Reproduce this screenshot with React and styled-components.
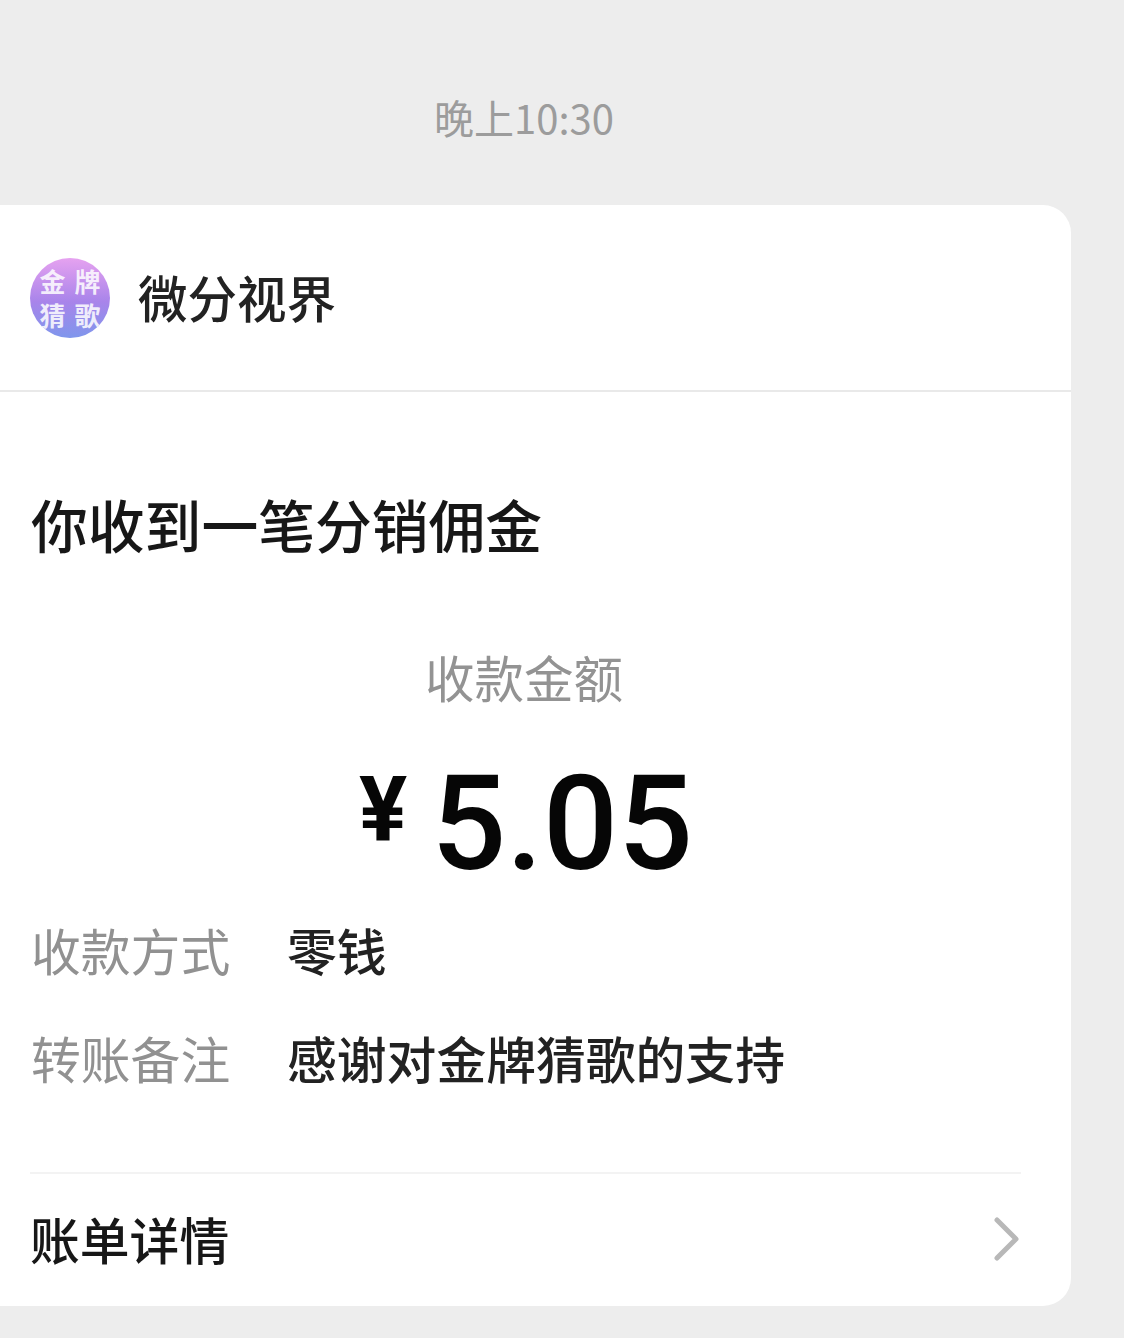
import styled, { createGlobalStyle } from "styled-components";

const CJK = `"Noto Sans CJK SC", "Noto Sans", sans-serif`;

const GlobalStyle = createGlobalStyle`
    html, body {
        margin: 0;
        padding: 0;
        height: 100%;
        overflow: hidden;
        background-color: #ededed;
        font-family: ${CJK};
    }
`;

const Page = styled.div`
    width: 1124px;
    height: 1338px;
    overflow: hidden;
    background-color: #ededed;
    padding-top: 90px;
    box-sizing: border-box;
`;

const Time = styled.div`
    width: 1048px;
    height: 54px;
    line-height: 54px;
    font-size: 40px;
    color: #9c9c9c;
    text-align: center;
    margin-bottom: 61px;
`;

const Card = styled.div`
    width: 1111px;
    height: 1101px;
    margin-left: -40px;
    padding-left: 40px;
    box-sizing: border-box;
    background-color: #ffffff;
    border-radius: 28px;
    display: flex;
    flex-direction: column;
`;

const Header = styled.div`
    display: flex;
    align-items: center;
    gap: 28px;
    height: 187px;
    margin-left: -40px;
    padding-left: 70px;
    box-sizing: border-box;
    border-bottom: 2px solid #e9e9e9;
`;

const Avatar = styled.div`
    width: 80px;
    height: 80px;
    border-radius: 50%;
    background: linear-gradient(180deg, #e6a2f0 0%, #a884ea 55%, #7f96ec 100%);
    display: grid;
    grid-template-columns: 35px 35px;
    grid-template-rows: 34px 34px;
    justify-content: center;
    align-content: center;
    color: rgba(255, 255, 255, 0.85);
    overflow: hidden;
`;

const AvatarChar = styled.span`
    display: block;
    font-size: 26px;
    font-weight: 700;
    line-height: 34px;
    text-align: center;
`;

const BrandName = styled.div`
    margin-top: -2px;
    font-size: 49.5px;
    font-weight: 500;
    line-height: 60px;
    color: #222222;
`;

const Title = styled.h1`
    margin: 95px 0 0 31px;
    font-size: 56.8px;
    font-weight: 500;
    line-height: 72px;
    color: #171717;
`;

const AmountLabel = styled.div`
    width: 1048px;
    margin-top: 88px;
    font-size: 49.5px;
    font-weight: 400;
    line-height: 60px;
    text-align: center;
    color: #939393;
`;

const Amount = styled.div`
    width: 1052px;
    display: flex;
    justify-content: center;
    align-items: flex-start;
    gap: 24px;
    margin-top: 57px;
    height: 120px;
    color: #060606;
    font-family: Roboto, "Liberation Sans", sans-serif;
`;

const Currency = styled.span`
    font-size: 90px;
    font-weight: 700;
    line-height: 94px;
`;

const Value = styled.span`
    font-size: 132px;
    font-weight: 500;
    line-height: 120px;
`;

const InfoList = styled.div`
    display: flex;
    flex-direction: column;
    gap: 48px;
    margin: 35px 0 0 31px;
`;

const InfoRow = styled.div`
    display: flex;
    gap: 60px;
    height: 60px;
    font-size: 49.8px;
    line-height: 60px;
`;

const InfoLabel = styled.span`
    width: 196px;
    white-space: nowrap;
    font-weight: 400;
    color: #919191;
`;

const InfoValue = styled.span`
    font-weight: 500;
    color: #222222;
`;

const Footer = styled.div`
    display: flex;
    align-items: center;
    justify-content: space-between;
    margin: 85px 50px 0 30px;
    height: 130px;
    box-sizing: border-box;
    border-top: 2px solid #f3f3f3;
`;

const FooterText = styled.span`
    font-size: 49.8px;
    font-weight: 500;
    line-height: 60px;
    color: #171717;
`;

const ChevronIcon = styled.svg`
    margin-top: 2px;
`;

function Chevron() {
    return (
        <ChevronIcon width="28" height="46" viewBox="0 0 28 46" fill="none">
            <path d="M4 4 L23 23 L4 42" stroke="#b8b8b8" strokeWidth="5" strokeLinecap="round" strokeLinejoin="round" />
        </ChevronIcon>
    );
}

export default function App() {
    return (
        <Page>
            <GlobalStyle />
            <Time>晚上10:30</Time>
            <Card>
                <Header>
                    <Avatar>
                        <AvatarChar>金</AvatarChar>
                        <AvatarChar>牌</AvatarChar>
                        <AvatarChar>猜</AvatarChar>
                        <AvatarChar>歌</AvatarChar>
                    </Avatar>
                    <BrandName>微分视界</BrandName>
                </Header>
                <Title>你收到一笔分销佣金</Title>
                <AmountLabel>收款金额</AmountLabel>
                <Amount>
                    <Currency>¥</Currency>
                    <Value>5.05</Value>
                </Amount>
                <InfoList>
                    <InfoRow>
                        <InfoLabel>收款方式</InfoLabel>
                        <InfoValue>零钱</InfoValue>
                    </InfoRow>
                    <InfoRow>
                        <InfoLabel>转账备注</InfoLabel>
                        <InfoValue>感谢对金牌猜歌的支持</InfoValue>
                    </InfoRow>
                </InfoList>
                <Footer>
                    <FooterText>账单详情</FooterText>
                    <Chevron />
                </Footer>
            </Card>
        </Page>
    );
}
